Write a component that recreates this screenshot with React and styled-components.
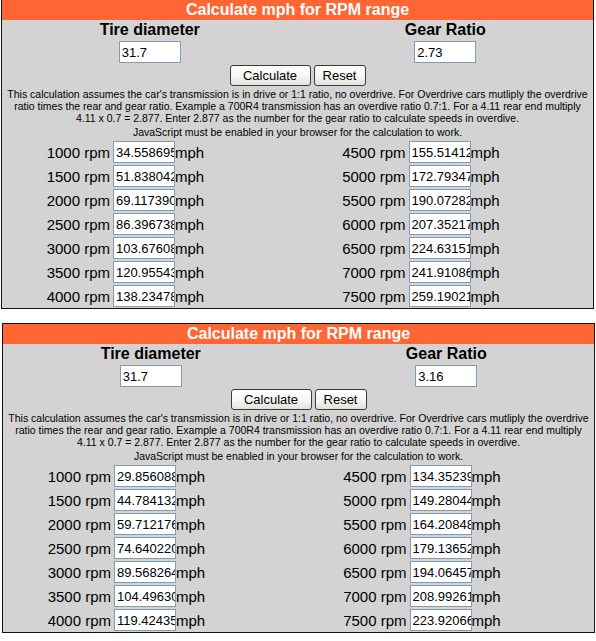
import React from "react";
import styled, { createGlobalStyle } from "styled-components";

const Global = createGlobalStyle`
  html, body { margin: 0; padding: 0; background: #ffffff; }
  body { font-family: "Liberation Sans", Arial, sans-serif; color: #000; }
`;

const Page = styled.div`
  display: flex;
  flex-direction: column;
  gap: 14px;
  padding-left: 1px;
  margin-top: -1px;
  width: 596px;
  box-sizing: border-box;
`;

const Box = styled.section`
  width: 593px;
  box-sizing: border-box;
  border: 1px solid #111;
  background: #d3d3d3;
  margin-left: ${(p) => (p.$shift ? "1px" : "0")};
`;

const Header = styled.h1`
  margin: 0;
  height: 20px;
  line-height: 20px;
  background: #ff6633;
  color: #ffffff;
  font-size: 16px;
  font-weight: bold;
  text-align: center;
`;

const InputsGrid = styled.div`
  display: grid;
  grid-template-columns: 1fr 1fr;
`;

const InputCol = styled.div`
  display: flex;
  flex-direction: column;
  align-items: center;
`;

const ColLabel = styled.div`
  height: 20px;
  line-height: 20px;
  font-size: 16px;
  font-weight: bold;
`;

const Field = styled.input`
  box-sizing: border-box;
  width: 62px;
  height: 22px;
  margin: ${(p) => (p.$row ? "0 0 0 3px" : "1px 0 0 0")};
  padding: 0 0 0 2px;
  border: 1px solid #7f9db9;
  background: #ffffff;
  font-family: "Liberation Sans", Arial, sans-serif;
  font-size: 13px;
  color: #000;
  outline: none;
`;

const ButtonRow = styled.div`
  display: flex;
  justify-content: center;
  gap: 3px;
  margin-top: 2px;
`;

const Button = styled.button`
  box-sizing: border-box;
  width: ${(p) => p.$w}px;
  height: 21px;
  padding: 0;
  border: 1px solid #3a3a3a;
  border-radius: 3px;
  background: linear-gradient(#ffffff 0%, #f6f6f2 55%, #e2e2da 100%);
  font-family: "Liberation Sans", Arial, sans-serif;
  font-size: 13px;
  color: #000;
  line-height: 19px;
`;

const Note = styled.p`
  margin: 2px 0 0 0;
  font-size: 10.5px;
  line-height: 12px;
  text-align: center;
  white-space: nowrap;
`;

const JsNote = styled.p`
  margin: 2px 0 0 0;
  font-size: 10.5px;
  line-height: 12px;
  text-align: center;
`;

const Rows = styled.div`
  display: grid;
  grid-template-columns: 108px 1fr 108px 1fr;
  grid-auto-rows: 24px;
  margin-top: 2px;
`;

const RpmLabel = styled.div`
  display: flex;
  align-items: center;
  justify-content: flex-end;
  font-size: 15px;
  white-space: nowrap;
`;

const ValueCell = styled.div`
  display: flex;
  align-items: center;
  font-size: 15px;
`;

const Unit = styled.span`
  font-size: 15px;
`;

const LEFT = [1000, 1500, 2000, 2500, 3000, 3500, 4000];
const RIGHT = [4500, 5000, 5500, 6000, 6500, 7000, 7500];

function mph(rpm, tire, gear) {
  return String((rpm * tire) / (gear * 336));
}

function Calculator({ tire, gear, shift }) {
  const t = parseFloat(tire);
  const g = parseFloat(gear);
  const rows = [];
  LEFT.forEach((l, i) => {
    const r = RIGHT[i];
    rows.push(
      <React.Fragment key={l}>
        <RpmLabel>{l} rpm</RpmLabel>
        <ValueCell>
          <Field $row readOnly defaultValue={mph(l, t, g)} />
          <Unit>mph</Unit>
        </ValueCell>
        <RpmLabel>{r} rpm</RpmLabel>
        <ValueCell>
          <Field $row readOnly defaultValue={mph(r, t, g)} />
          <Unit>mph</Unit>
        </ValueCell>
      </React.Fragment>
    );
  });
  return (
    <Box $shift={shift}>
      <Header>Calculate mph for RPM range</Header>
      <InputsGrid>
        <InputCol>
          <ColLabel>Tire diameter</ColLabel>
          <Field readOnly defaultValue={tire} />
        </InputCol>
        <InputCol>
          <ColLabel>Gear Ratio</ColLabel>
          <Field readOnly defaultValue={gear} />
        </InputCol>
      </InputsGrid>
      <ButtonRow>
        <Button type="button" $w={81}>Calculate</Button>
        <Button type="button" $w={52}>Reset</Button>
      </ButtonRow>
      <Note>
        This calculation assumes the car's transmission is in drive or 1:1 ratio, no overdrive. For Overdrive cars mutliply the overdrive
        <br />
        ratio times the rear and gear ratio. Example a 700R4 transmission has an overdive ratio 0.7:1. For a 4.11 rear end multiply
        <br />
        4.11 x 0.7 = 2.877. Enter 2.877 as the number for the gear ratio to calculate speeds in overdive.
      </Note>
      <JsNote>JavaScript must be enabled in your browser for the calculation to work.</JsNote>
      <Rows>{rows}</Rows>
    </Box>
  );
}

export default function App() {
  return (
    <>
      <Global />
      <Page>
        <Calculator tire="31.7" gear="2.73" />
        <Calculator tire="31.7" gear="3.16" shift />
      </Page>
    </>
  );
}
